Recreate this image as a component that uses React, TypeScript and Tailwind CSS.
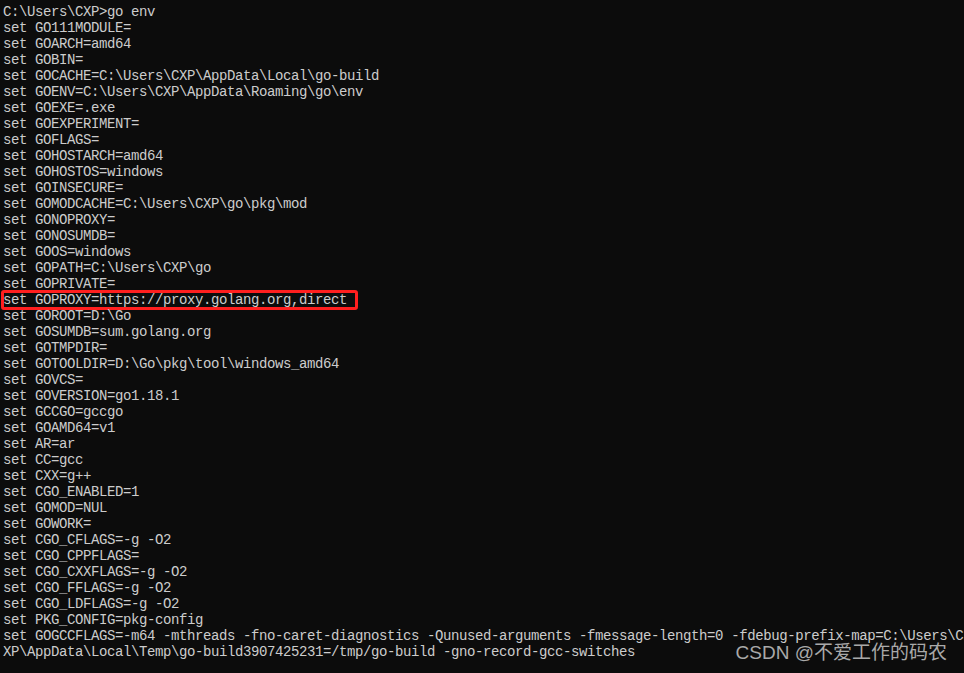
import React from 'react'

const lines: string[] = [
  'C:\\Users\\CXP>go env',
  'set GO111MODULE=',
  'set GOARCH=amd64',
  'set GOBIN=',
  'set GOCACHE=C:\\Users\\CXP\\AppData\\Local\\go-build',
  'set GOENV=C:\\Users\\CXP\\AppData\\Roaming\\go\\env',
  'set GOEXE=.exe',
  'set GOEXPERIMENT=',
  'set GOFLAGS=',
  'set GOHOSTARCH=amd64',
  'set GOHOSTOS=windows',
  'set GOINSECURE=',
  'set GOMODCACHE=C:\\Users\\CXP\\go\\pkg\\mod',
  'set GONOPROXY=',
  'set GONOSUMDB=',
  'set GOOS=windows',
  'set GOPATH=C:\\Users\\CXP\\go',
  'set GOPRIVATE=',
  'set GOPROXY=https://proxy.golang.org,direct',
  'set GOROOT=D:\\Go',
  'set GOSUMDB=sum.golang.org',
  'set GOTMPDIR=',
  'set GOTOOLDIR=D:\\Go\\pkg\\tool\\windows_amd64',
  'set GOVCS=',
  'set GOVERSION=go1.18.1',
  'set GCCGO=gccgo',
  'set GOAMD64=v1',
  'set AR=ar',
  'set CC=gcc',
  'set CXX=g++',
  'set CGO_ENABLED=1',
  'set GOMOD=NUL',
  'set GOWORK=',
  'set CGO_CFLAGS=-g -O2',
  'set CGO_CPPFLAGS=',
  'set CGO_CXXFLAGS=-g -O2',
  'set CGO_FFLAGS=-g -O2',
  'set CGO_LDFLAGS=-g -O2',
  'set PKG_CONFIG=pkg-config',
  'set GOGCCFLAGS=-m64 -mthreads -fno-caret-diagnostics -Qunused-arguments -fmessage-length=0 -fdebug-prefix-map=C:\\Users\\C',
  'XP\\AppData\\Local\\Temp\\go-build3907425231=/tmp/go-build -gno-record-gcc-switches',
]

const App = (): React.JSX.Element => {
  return (
    <div className="relative w-[964px] h-[673px] overflow-hidden bg-[#0c0c0c]">
      <div className="pt-[4px] pl-[3px] font-['Liberation_Mono',monospace] text-[14px] leading-4 tracking-[-0.4px] text-[#cccccc] whitespace-pre">
        {lines.map((line, i) => (
          <div key={i} className="relative h-4">
            {line}
            {line.startsWith('set GOPROXY') && (
              <span className="absolute left-[-2px] top-[-2px] w-[357px] h-[20px] rounded-[3px] border-[3px] border-[#ff1f1f]" />
            )}
          </div>
        ))}
      </div>
      <div className="absolute right-[17px] top-[644px] font-['Liberation_Sans','Noto_Sans_CJK_SC',sans-serif] text-[19px] leading-[18px] text-[#a9a9a9]">
        CSDN @不爱工作的码农
      </div>
    </div>
  )
}

export default App
